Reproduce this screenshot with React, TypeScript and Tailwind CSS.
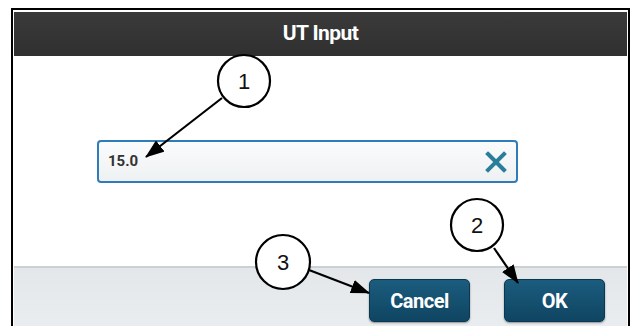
import React from 'react';

// Callout bubble + arrow drawn over the dialog
const callouts = [
  { n: '1', cx: 244, cy: 81, r: 26, x1: 222, y1: 98, x2: 146, y2: 157 },
  { n: '2', cx: 477, cy: 225, r: 26, x1: 494, y1: 248, x2: 518, y2: 283 },
  { n: '3', cx: 283, cy: 262, r: 27, x1: 309, y1: 270, x2: 369, y2: 293 },
];

const Callouts = () => (
  <svg
    className="pointer-events-none absolute left-0 top-0"
    width="633"
    height="326"
    viewBox="0 0 633 326"
  >
    <defs>
      <marker
        id="head"
        markerUnits="userSpaceOnUse"
        markerWidth="20"
        markerHeight="14"
        refX="18"
        refY="7"
        orient="auto"
      >
        <path d="M0 0 L19 7 L0 14 Z" fill="#000" />
      </marker>
    </defs>
    {callouts.map((c) => (
      <g key={c.n}>
        <line
          x1={c.x1}
          y1={c.y1}
          x2={c.x2}
          y2={c.y2}
          stroke="#000"
          strokeWidth="2.2"
          markerEnd="url(#head)"
        />
        <circle cx={c.cx} cy={c.cy} r={c.r} fill="#fff" stroke="#000" strokeWidth="2.2" />
        <text
          x={c.cx}
          y={c.cy + 8}
          textAnchor="middle"
          fontSize="22"
          fontFamily="'Liberation Sans', Arial, sans-serif"
          fill="#111"
        >
          {c.n}
        </text>
      </g>
    ))}
  </svg>
);

const DialogButton = ({ label }: { label: string }) => (
  <button className="h-[43px] w-[101px] rounded-[5px] border border-[#0a3850] bg-gradient-to-b from-[#1b5c7e] to-[#0f4562] text-[20px] font-bold tracking-[-0.5px] text-white shadow-[0_1px_2px_rgba(0,0,0,0.4)]">
    {label}
  </button>
);

export default function App() {
  return (
    <div
      className="relative h-[326px] w-[633px] overflow-hidden bg-white"
      style={{ fontFamily: 'Roboto, "Liberation Sans", Arial, sans-serif' }}
    >
      <div className="ml-[11px] mt-[8px] h-[318px] w-[619px] border-2 border-b-0 border-black px-[1px] pt-[2px]">
        <div className="flex h-full flex-col">
          {/* title bar */}
          <div className="flex h-[44px] items-center justify-center bg-gradient-to-b from-[#3a3a3a] to-[#303030]">
            <span className="text-[21px] font-bold tracking-[-0.6px] text-white">UT Input</span>
          </div>

          {/* body */}
          <div className="h-[210px] pl-[83px] pt-[84px]">
            <div className="flex h-[43px] w-[421px] items-center justify-between rounded-[4px] border-2 border-[#2f7cb8] bg-gradient-to-b from-[#fafbfc] to-[#eef1f3] pl-[9px] pr-[9px]">
              <span className="text-[15px] font-bold text-[#333]">15.0</span>
              <svg width="22" height="22" viewBox="0 0 22 22">
                <path
                  d="M3 3 L19 19 M19 3 L3 19"
                  stroke="#2b7d9c"
                  strokeWidth="4"
                  strokeLinecap="square"
                />
              </svg>
            </div>
          </div>

          {/* footer */}
          <div className="flex flex-1 items-start justify-end gap-[34px] border-t-2 border-[#cbd0d3] bg-gradient-to-b from-[#e3e7ea] to-[#e9edf0] pr-[22px] pt-[11px]">
            <DialogButton label="Cancel" />
            <DialogButton label="OK" />
          </div>
        </div>
      </div>

      <Callouts />
    </div>
  );
}
